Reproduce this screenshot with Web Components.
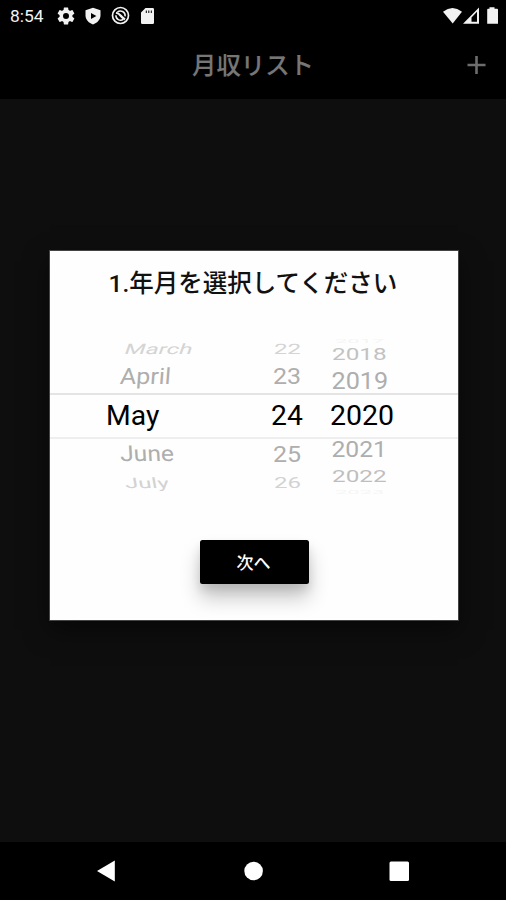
<!DOCTYPE html>
<html lang="ja"><head><meta charset="utf-8"><title>月収リスト</title>
<style>
html,body{margin:0;height:100%;background:#000}
body{font-family:Roboto,"Noto Sans CJK JP",sans-serif}
</style></head><body>
<income-screen></income-screen>
<script>
const define=(name,html,setup)=>customElements.define(name,class extends HTMLElement{
  connectedCallback(){
    if(this.shadowRoot)return;
    this.attachShadow({mode:'open'}).innerHTML=html;
    if(setup)setup(this,this.shadowRoot);
  }
});

define('status-bar',`<style>
:host{display:flex;height:32px;box-sizing:border-box;padding:0 7px 0 10px;align-items:center;color:#f2f2f2;background:#000}
time{font-size:17.400px;line-height:32px;width:47px;font-weight:400;white-space:nowrap}
svg{display:block;fill:#f2f2f2}
.left{display:flex;gap:9px;align-items:center}
.left svg{margin-top:-1px}
.right{display:flex;margin-left:auto;align-items:center;margin-top:-1px}
</style>
<time>8:54</time>
<div class="left">
<svg width="18" height="18" viewBox="1.5 1.5 21 21"><path fill-rule="evenodd" d="M19.43 12.98c.04-.32.07-.64.07-.98s-.03-.66-.07-.98l2.11-1.65c.19-.15.24-.42.12-.64l-2-3.46c-.12-.22-.39-.3-.61-.22l-2.49 1c-.52-.4-1.08-.73-1.69-.98l-.38-2.65A.49.49 0 0 0 14 2h-4c-.25 0-.46.18-.49.42l-.38 2.65c-.61.25-1.17.59-1.69.98l-2.49-1c-.23-.09-.49 0-.61.22l-2 3.46c-.13.22-.07.49.12.64l2.11 1.65c-.04.32-.07.65-.07.98s.03.66.07.98l-2.11 1.65c-.19.15-.24.42-.12.64l2 3.46c.12.22.39.3.61.22l2.49-1c.52.4 1.08.73 1.69.98l.38 2.65c.03.24.24.42.49.42h4c.25 0 .46-.18.49-.42l.38-2.65c.61-.25 1.17-.59 1.69-.98l2.49 1c.23.09.49 0 .61-.22l2-3.46c.12-.22.07-.49-.12-.64zM12 15.500a3.500 3.500 0 1 1 0-7 3.500 3.500 0 0 1 0 7z"/></svg>
<svg width="18" height="18" viewBox="0 0 18 18"><path fill-rule="evenodd" d="M9 .8 16.500 3.200V8.500C16.500 12.600 13 16.200 9 17.400 5 16.200 1.500 12.600 1.500 8.500V3.200zM7 6V12L12.400 9z"/></svg>
<svg width="19" height="19" viewBox="0 0 19 19"><g fill="none" stroke="#f2f2f2"><circle cx="9.500" cy="9.500" r="8" stroke-width="1.700"/><path d="M6.300 6.200A4.700 4.700 0 0 1 14.100 10.300M12.300 13.300A4.700 4.700 0 0 1 4.900 9.200" stroke-width="1.500"/><path d="M5 6.800Q8 7.500 9.500 9.500T14 13.500" stroke-width="2.200"/></g></svg>
<svg width="18" height="18" viewBox="0.5 0 18 18"><path fill-rule="evenodd" d="M7 1h7.200Q15.500 1 15.500 2.300V15.700Q15.500 17 14.200 17H3.800Q2.500 17 2.500 15.700V5.500zM7.300 3.500V6H8.300V3.500zM9.800 3.500V6H10.800V3.500zM12.300 3.500V6H13.300V3.500z"/></svg>
</div>
<div class="right">
<svg width="56" height="18" viewBox="0 0 56 18"><path d="M0 4.800Q9.500-2.600 19 4.800L9.700 16.600z"/><path fill-rule="evenodd" d="M36 .5V16.800H20zM28.500 10.500V14.800H34V4.800z"/><path d="M46.500 1.800V.2h5v1.600h2.600q.9 0 .9 1V16.700H44.200V2.800q0-1 .9-1z"/></svg>
</div>`);

define('app-bar',`<style>
:host{display:grid;grid-template-columns:50px 1fr 50px;height:67px;background:#000;color:#767676;align-items:center}
h1{grid-column:2;margin:1px 0 0;text-align:center;font-size:24.400px;line-height:36px;font-weight:500;white-space:nowrap;-webkit-text-stroke:.15px #767676}
svg{display:block;margin:-2px 0 0 10px}
</style><h1><slot></slot></h1>
<svg width="20" height="20" viewBox="0 0 20 20"><path d="M10.500 1v18M1.500 10h18" stroke="#6d6d6d" stroke-width="2.600"/></svg>`);

define('wheel-item',`<style>
:host{display:flex;align-items:center;white-space:nowrap;overflow:visible}
span{display:block;line-height:1;transform-origin:0 50%}
</style><span><slot></slot></span>`,(el,root)=>{
  const span=root.querySelector('span'),a=n=>el.getAttribute(n);
  el.style.height=a('h')+'px';
  el.style.paddingLeft=(a('x')||0)+'px';
  el.style.color=a('tone');
  span.style.fontSize=a('size')+'px';
  span.style.transform='scaleY('+(a('flat')||1)+') skewX('+(a('lean')||0)+'deg)';
});

define('date-wheel',`<style>:host{display:flex;flex-direction:column;height:157px;overflow:hidden}::slotted(*){flex:none}</style><slot></slot>`);

define('date-picker',`<style>
:host{display:grid;height:157px;font-weight:400}
.wheels,.band{grid-area:1/1}
.wheels{display:grid;grid-template-columns:165px 59px 128px;padding:1px 0 0 56px;height:156px}
.band{height:42px;margin-top:55px;border-top:2px solid #e4e4e4;border-bottom:2px solid #eee}
</style>
<div class="band"></div>
<div class="wheels">
<date-wheel>
<wheel-item h="19" x="18.500" size="24" flat=".6" lean="-12" tone="#d4d4d4">March</wheel-item>
<wheel-item h="36" x="13.500" size="25" flat=".9" lean="-4" tone="#aeaeae">April</wheel-item>
<wheel-item h="44" size="28.300" tone="#000">May</wheel-item>
<wheel-item h="33" x="13.500" size="24.700" flat=".88" lean="3" tone="#aeaeae">June</wheel-item>
<wheel-item h="24" x="18.500" size="24" flat=".6" lean="6" tone="#d2d2d2">July</wheel-item>
</date-wheel>
<date-wheel>
<wheel-item h="19" x="3" size="24" flat=".6" lean="-3" tone="#d4d4d4">22</wheel-item>
<wheel-item h="36" x="2" size="25" flat=".9" tone="#aeaeae">23</wheel-item>
<wheel-item h="44" size="28.300" tone="#000">24</wheel-item>
<wheel-item h="33" x="2" size="25" flat=".88" tone="#aeaeae">25</wheel-item>
<wheel-item h="24" x="3" size="24" flat=".6" tone="#d2d2d2">26</wheel-item>
</date-wheel>
<date-wheel>
<wheel-item h="4" x="5" size="22" flat=".25" tone="#f5f5f5">2017</wheel-item>
<wheel-item h="23" x="2" size="24.300" flat=".7" tone="#c2c2c2">2018</wheel-item>
<wheel-item h="31" x="1.500" size="25.200" flat=".93" tone="#aeaeae">2019</wheel-item>
<wheel-item h="38" size="28.500" tone="#000">2020</wheel-item>
<wheel-item h="30" x="1.500" size="24.700" flat=".93" tone="#aeaeae">2021</wheel-item>
<wheel-item h="23" x="2" size="24.300" flat=".7" tone="#bebebe">2022</wheel-item>
<wheel-item h="7" x="5" size="22" flat=".25" tone="#f5f5f5">2023</wheel-item>
</date-wheel>
</div>`);

define('raised-button',`<style>
:host{display:block;width:109px;height:44px}
button{display:block;width:100%;height:100%;border:0;border-radius:2.500px;padding:3px 1px 0 0;background:#000;color:#fff;font:500 17px/41px Roboto,"Noto Sans CJK JP",sans-serif;box-shadow:0 14px 20px rgba(0,0,0,.22),0 6px 10px rgba(0,0,0,.1)}
</style><button><slot></slot></button>`);

define('modal-dialog',`<style>
:host{display:flex;flex-direction:column;align-items:stretch;width:408px;height:369px;background:#fefefe;box-shadow:0 0 0 1px #444,0 10px 24px rgba(0,0,0,.5);overflow:hidden}
h2{margin:15px 2px 0 0;height:36px;line-height:36px;font-size:24.500px;font-weight:500;color:#111;text-align:center;white-space:nowrap}
date-picker{margin-top:36px}
raised-button{margin:45px 0 0 149.500px}
</style>
<h2><slot></slot></h2><date-picker></date-picker><raised-button>次へ</raised-button>`);

define('nav-bar',`<style>
:host{display:flex;height:58px;align-items:center;background:#000;padding-left:96px;box-sizing:border-box}
svg{display:block;fill:#fff}
</style>
<svg width="314" height="24" viewBox="0 0 314 24"><path d="M1 12 18.800 1.500V22.500z"/><circle cx="157.600" cy="12" r="9.300"/><rect x="293.500" y="2.500" width="19.500" height="19.500" rx="1.500"/></svg>`);

define('income-screen',`<style>
:host{display:flex;flex-direction:column;height:900px;width:506px;overflow:hidden;background:#000}
main{flex:1;background:#0e0e0e;padding:152px 0 0 50px;box-sizing:border-box}
</style>
<status-bar></status-bar><app-bar>月収リスト</app-bar>
<main><modal-dialog>1.年月を選択してください</modal-dialog></main>
<nav-bar></nav-bar>`);
</script></body></html>
